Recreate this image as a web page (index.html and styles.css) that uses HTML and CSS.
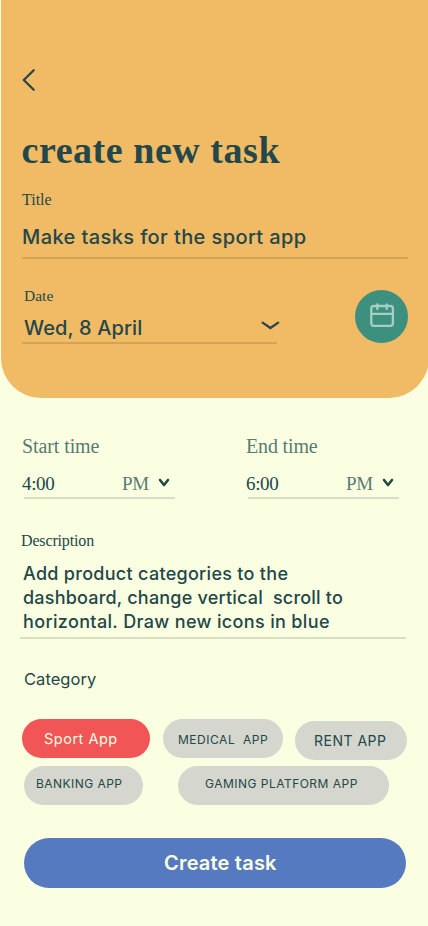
FILE: index.html
```html
<!DOCTYPE html>
<html lang="en">
<head>
<meta charset="utf-8">
<meta name="viewport" content="width=device-width, initial-scale=1">
<title>Create new task</title>
<link rel="stylesheet" href="styles.css">
</head>
<body>
<div class="screen">
  <header class="header">
    <svg class="back" width="16" height="24" viewBox="0 0 16 24"><path d="M11.7 2.2 1.8 12 11.7 21.8"/></svg>
    <h1 class="heading">create new task</h1>
    <div class="label">Title</div>
    <div class="title-field">Make tasks for the sport app</div>
    <div class="date-row">
      <div class="date">
        <div class="label date-label">Date</div>
        <div class="date-field">
          <span>Wed, 8 April</span>
          <svg class="date-chevron" width="20" height="12" viewBox="0 0 20 12"><path d="M2.6 2.6 10.4 8 18.2 2.6"/></svg>
        </div>
      </div>
      <div class="calendar">
        <svg width="53" height="53" viewBox="0 0 53 53"><rect x="16.3" y="16" width="21.6" height="19.8" rx="2.5"/><path d="M16.3 23.9H37.9M22.3 14.4V19M31.7 14.4V19"/></svg>
      </div>
    </div>
  </header>
  <main class="main">
    <div class="times">
      <div class="time">
        <div class="time-label start-label">Start time</div>
        <div class="time-field"><span class="clock">4:00</span><span class="period">PM</span>
          <svg class="time-chevron" width="12" height="10" viewBox="0 0 12 10"><path d="M2 2 6 7 10 2"/></svg></div>
      </div>
      <div class="time">
        <div class="time-label">End time</div>
        <div class="time-field"><span class="clock">6:00</span><span class="period">PM</span>
          <svg class="time-chevron" width="12" height="10" viewBox="0 0 12 10"><path d="M2 2 6 7 10 2"/></svg></div>
      </div>
    </div>
    <div class="label description-label">Description</div>
    <div class="description">
      <div class="line-one">Add product categories to the</div>
      <div class="line-two">dashboard, change vertical  scroll to</div>
      <div class="line-three">horizontal. Draw new icons in blue</div>
    </div>
    <div class="category">Category</div>
    <div class="chips">
      <div class="chip sport">Sport App</div>
      <div class="chip medical">MEDICAL  APP</div>
      <div class="chip rent">RENT APP</div>
    </div>
    <div class="chips second">
      <div class="chip banking">BANKING APP</div>
      <div class="chip gaming">GAMING PLATFORM APP</div>
    </div>
    <button class="submit">Create task</button>
  </main>
</div>
</body>
</html>
```
FILE: styles.css
```css
* { box-sizing: border-box; }
body {
  margin: 0;
  background: #faffe1;
  color: #23474a;
  font-family: Inter, sans-serif;
}
.screen {
  width: 428px;
  height: 926px;
  overflow: hidden;
}
svg {
  display: block;
  fill: none;
  stroke: #23474a;
  stroke-width: 2.3;
  stroke-linecap: round;
  stroke-linejoin: round;
}
.header {
  width: 428px;
  height: 398px;
  margin-left: 1px;
  padding: 68px 21px 0;
  background: #f0bb64;
  border-radius: 0 0 40px 40px;
}
.heading {
  margin: 38px 0 20px -0.5px;
  font: 700 38px/40px "Liberation Serif", serif;
  letter-spacing: 0.54px;
  white-space: nowrap;
}
.label { font: 16px/20px "Liberation Serif", serif; }
.title-field {
  width: 386px;
  margin-top: 15px;
  padding-bottom: 8px;
  border-bottom: 2px solid #d2a458;
  font-size: 20px;
  font-weight: 500;
  line-height: 24px;
  letter-spacing: 0.4px;
}
.date-row {
  display: flex;
  justify-content: space-between;
  width: 386px;
  margin-top: 27px;
}
.date { width: 255px; }
.date-label {
  padding-left: 2px;
  font-size: 15.5px;
}
.date-field {
  display: flex;
  justify-content: space-between;
  margin-top: 10px;
  padding: 0 0 2px 2px;
  border-bottom: 2px solid #d2a458;
  font-size: 20px;
  font-weight: 500;
  line-height: 24px;
  letter-spacing: 0.13px;
}
.date-chevron { margin: 4px -3px 0 0; }
.calendar {
  width: 53px;
  height: 53px;
  margin-top: 4px;
  border-radius: 50%;
  background: #3d8f7e;
}
.calendar svg { stroke: #a5cfc2; }
.main { padding: 36px 22px 0; }
.times {
  display: flex;
  gap: 73px;
  padding-left: 2px;
}
.time { width: 151px; }
.time-label {
  margin-left: -2px;
  color: #5a7a75;
  font: 20px/24px "Liberation Serif", serif;
  letter-spacing: -0.15px;
}
.start-label { letter-spacing: -0.1px; }
.time-field {
  display: flex;
  margin-top: 14px;
  padding-bottom: 1px;
  border-bottom: 2px solid #dadec5;
  font: 19px/24px "Liberation Serif", serif;
  letter-spacing: -0.35px;
}
.clock { width: 100px; margin-left: -2px; }
.period { width: 36px; color: #5a7a75; }
.time-chevron { margin-top: 6px; stroke-width: 2.6; }
.description-label {
  margin: 32px 0 0 -1px;
  letter-spacing: -0.15px;
}
.description {
  width: 386px;
  margin: 11px 0 0 -2px;
  padding: 0 0 3px 3px;
  border-bottom: 2px solid #dadec5;
  font-size: 18px;
  font-weight: 500;
  line-height: 24px;
  white-space: pre;
}
.description > div { height: 24px; }
.description { white-space: normal; }
.line-one { letter-spacing: 0.29px; }
.line-two { letter-spacing: 0.2px; white-space: pre; }
.line-three { letter-spacing: 0.35px; }
.category {
  margin: 30px 0 0 2px;
  font-size: 16.5px;
  line-height: 20px;
  letter-spacing: 0.04px;
}
.chips {
  display: flex;
  align-items: flex-start;
  height: 41px;
  margin-top: 30px;
}
.chip {
  flex: none;
  height: 39px;
  border-radius: 20px;
  background: #d5d6cd;
  font-size: 12px;
  white-space: pre;
}
.sport {
  width: 128px;
  padding-left: 22px;
  background: #f15555;
  color: #faffe1;
  font-size: 14.5px;
  line-height: 40px;
  letter-spacing: 0.5px;
}
.medical {
  width: 120px;
  margin-left: 13px;
  padding-left: 15px;
  line-height: 41px;
  letter-spacing: 0.53px;
}
.rent {
  width: 112px;
  margin: 2px 0 0 12px;
  padding-left: 19px;
  font-size: 14px;
  line-height: 40px;
  letter-spacing: 0.5px;
}
.second {
  height: 39px;
  margin: 6px 0 0 2px;
}
.banking {
  width: 119px;
  padding-left: 12px;
  line-height: 35px;
  letter-spacing: 0.45px;
}
.gaming {
  width: 211px;
  margin-left: 35px;
  padding-left: 27px;
  line-height: 35px;
  letter-spacing: 0.48px;
}
.submit {
  display: block;
  width: 382px;
  height: 50px;
  margin: 33px 0 0 2px;
  padding: 0 0 0 140px;
  border: 0;
  border-radius: 25px;
  background: #567ac0;
  color: #faffe1;
  font: 600 20px/50px Inter, sans-serif;
  letter-spacing: 0.2px;
  text-align: left;
}
```
